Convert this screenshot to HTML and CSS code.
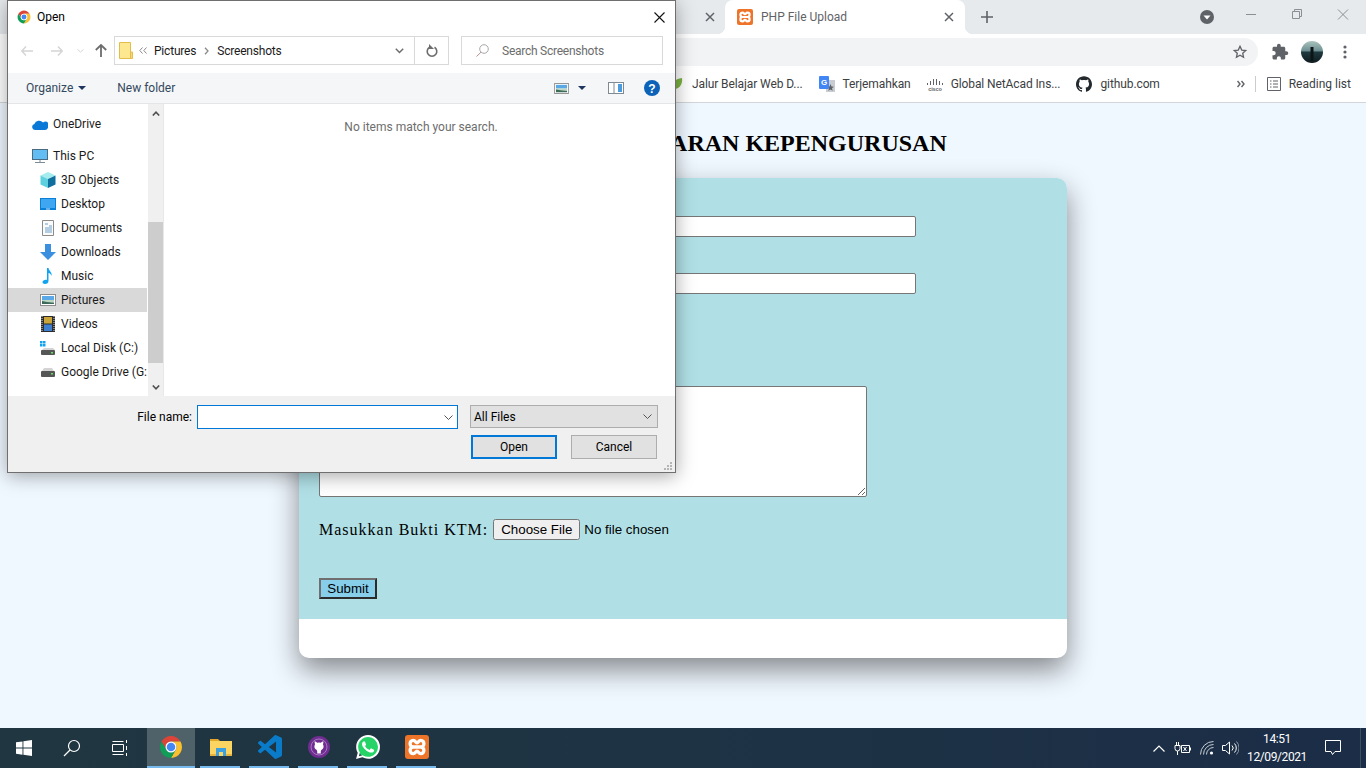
FILE: index.html
```html
<!DOCTYPE html>
<html lang="en">
<head>
    <meta charset="UTF-8">
    <title>PHP File Upload</title>
    <link rel="stylesheet" href="styles.css">
</head>
<body>
<svg class="defs" width="0" height="0">
    <symbol id="chrome" viewBox="0 0 48 48">
        <path fill="#db4437" d="M4.95 13A22 22 0 0 1 43.05 13H24A11 11 0 0 0 14.47 29.5z"/>
        <path fill="#fbc02d" d="M43.05 13A22 22 0 0 1 24 46l9.53-16.5A11 11 0 0 0 24 13z"/>
        <path fill="#0f9d58" d="M24 46A22 22 0 0 1 4.95 13l9.52 16.5A11 11 0 0 0 33.53 29.5z"/>
        <circle cx="24" cy="24" r="11" fill="#fff"/>
        <circle cx="24" cy="24" r="8.5" fill="#4587f4"/>
    </symbol>
    <symbol id="xampp" viewBox="0 0 16 16">
        <rect width="16" height="16" rx="2" fill="#ee7429"/>
        <path fill="none" stroke="#fff" stroke-width="2.200" d="M5.500 8C2.700 8 2.700 3.600 5.500 3.600 7 3.600 7 5.200 8 5.200s1-1.600 2.500-1.600c2.800 0 2.800 4.400 0 4.400 2.800 0 2.800 4.400 0 4.400C9 12.400 9 10.800 8 10.800s-1 1.600-2.500 1.600C2.700 12.400 2.700 8 5.500 8zM5.500 8h5"/>
    </symbol>
    <symbol id="github" viewBox="0 0 24 24">
        <path d="M12 .297c-6.630 0-12 5.373-12 12 0 5.303 3.438 9.800 8.205 11.385.6.113.82-.258.82-.577 0-.285-.01-1.040-.015-2.040-3.338.724-4.042-1.610-4.042-1.610C4.422 18.070 3.633 17.700 3.633 17.700c-1.087-.744.084-.729.084-.729 1.205.084 1.838 1.236 1.838 1.236 1.070 1.835 2.809 1.305 3.495.998.108-.776.417-1.305.76-1.605-2.665-.3-5.466-1.332-5.466-5.930 0-1.310.465-2.380 1.235-3.220-.135-.303-.54-1.523.105-3.176 0 0 1.005-.322 3.300 1.230.96-.267 1.980-.399 3-.405 1.020.006 2.040.138 3 .405 2.280-1.552 3.285-1.230 3.285-1.230.645 1.653.24 2.873.12 3.176.765.84 1.230 1.910 1.230 3.220 0 4.610-2.805 5.625-5.475 5.920.42.36.81 1.096.81 2.220 0 1.606-.015 2.896-.015 3.286 0 .315.21.69.825.57C20.565 22.092 24 17.592 24 12.297c0-6.627-5.373-12-12-12"/>
    </symbol>
    <symbol id="scenery" viewBox="0 0 16 12">
        <rect x=".5" y=".5" width="15" height="11" fill="#fff" stroke="#8d8d8d"/>
        <rect x="2" y="2" width="12" height="4" fill="#5aa9e6"/>
        <rect x="2" y="6" width="12" height="2" fill="#bcd6c4"/>
        <path fill="#3d6b5a" d="M2 10V7l5 1 7 .5V10z"/>
    </symbol>
    <symbol id="drive" viewBox="0 0 16 12">
        <path fill="#d4d4d4" d="M2 5l2-3h8l2 3z"/>
        <rect x="1" y="5" width="14" height="6" rx="1" fill="#565656"/>
        <rect x="11" y="7" width="2" height="1.500" fill="#5fe05f"/>
    </symbol>
</svg>

<header class="browser">
    <div class="tabstrip">
        <div class="tab-prev">
            <svg class="ico-x" width="10" height="10" viewBox="0 0 10 10"><path d="M1 1l8 8M9 1l-8 8" stroke="#5f6368" stroke-width="1.500"/></svg>
        </div>
        <div class="tab">
            <svg class="fav" width="16" height="16"><use href="#xampp"/></svg>
            <span class="tab-title">PHP File Upload</span>
            <svg class="ico-x" width="10" height="10" viewBox="0 0 10 10"><path d="M1 1l8 8M9 1l-8 8" stroke="#5f6368" stroke-width="1.500"/></svg>
        </div>
        <svg class="newtab" width="12" height="12" viewBox="0 0 12 12"><path d="M6 0v12M0 6h12" stroke="#5f6368" stroke-width="1.600"/></svg>
        <svg class="tabsearch" width="14" height="14" viewBox="0 0 14 14"><circle cx="7" cy="7" r="7" fill="#5f6368"/><path d="M3.500 5.500h7L7 9.500z" fill="#fff"/></svg>
        <div class="winctl">
            <svg width="46" height="34" viewBox="0 0 46 34"><path d="M18 14.500h10" stroke="#8b8e92"/></svg>
            <svg width="46" height="34" viewBox="0 0 46 34"><path d="M20.500 11.500v-2h7v7h-2M18.500 11.500h7v7h-7z" fill="none" stroke="#8b8e92"/></svg>
            <svg width="46" height="34" viewBox="0 0 46 34"><path d="M18 9.500l10 10M28 9.500l-10 10" stroke="#8b8e92"/></svg>
        </div>
    </div>
    <div class="toolbar">
        <div class="omnibox">
            <svg width="16" height="16" viewBox="0 0 24 24"><path fill="none" stroke="#5f6368" stroke-width="2" d="M12 3.500l2.600 5.600 6 .7-4.500 4.100 1.200 6-5.300-3-5.300 3 1.200-6L3.400 9.800l6-.7z"/></svg>
        </div>
        <svg class="tool-ico" width="18" height="18" viewBox="0 0 24 24"><path fill="#5f6368" d="M20.500 11H19V7c0-1.100-.9-2-2-2h-4V3.500C13 2.120 11.880 1 10.500 1S8 2.120 8 3.500V5H4c-1.100 0-1.990.9-1.990 2v3.800H3.500c1.490 0 2.700 1.210 2.700 2.700s-1.210 2.700-2.700 2.700H2V20c0 1.100.9 2 2 2h3.800v-1.500c0-1.490 1.210-2.700 2.700-2.700 1.490 0 2.700 1.210 2.700 2.700V22H17c1.100 0 2-.9 2-2v-4h1.500c1.380 0 2.500-1.120 2.500-2.500S21.880 11 20.500 11z"/></svg>
        <svg class="avatar" width="22" height="22" viewBox="0 0 22 22">
            <defs><linearGradient id="sky" x1="0" y1="0" x2="0" y2="1"><stop offset="0" stop-color="#a9c4bd"/><stop offset=".45" stop-color="#6d8f92"/><stop offset=".5" stop-color="#1f3a40"/><stop offset="1" stop-color="#0e1c20"/></linearGradient></defs>
            <circle cx="11" cy="11" r="11" fill="url(#sky)"/>
            <rect x="9.500" y="6" width="3" height="14" fill="#0c1416"/>
        </svg>
        <svg class="tool-dots" width="4" height="14" viewBox="0 0 4 14"><circle cx="2" cy="2" r="1.600" fill="#5f6368"/><circle cx="2" cy="7" r="1.600" fill="#5f6368"/><circle cx="2" cy="12" r="1.600" fill="#5f6368"/></svg>
    </div>
    <div class="bookmarks">
        <div class="bm">
            <svg width="16" height="16" viewBox="0 0 16 16"><path fill="#7cb342" d="M2 14C2 7 7 3 14 2c1 7-3 12-12 12z"/></svg>
            <span>Jalur Belajar Web D...</span>
        </div>
        <div class="bm">
            <svg width="16" height="16" viewBox="0 0 16 16"><path fill="#c9ccd1" d="M7 4h9v12H7z"/><path fill="#5f6368" d="M11.500 8l1 2.500 2.500.2-2 1.600.7 2.500-2.200-1.400-2.200 1.400.7-2.500-2-1.600 2.500-.2z"/><rect width="10" height="13" rx="1" fill="#4285f4"/><text x="5" y="9" class="g-mark">G</text></svg>
            <span>Terjemahkan</span>
        </div>
        <div class="bm">
            <svg width="16" height="16" viewBox="0 0 16 16"><path stroke="#5f6368" d="M.5 7V9M3.500 5V9M6.500 3V9M9.500 3V9M12.500 5V9M15.500 7V9"/><text x="8" y="14.500" class="cisco-mark">cisco</text></svg>
            <span>Global NetAcad Ins...</span>
        </div>
        <div class="bm">
            <svg class="gh" width="16" height="16"><use href="#github"/></svg>
            <span>github.com</span>
        </div>
        <div class="bm-end">
            <svg width="8" height="8" viewBox="0 0 8 8"><path d="M.5 1l2.500 3-2.500 3M4.500 1L7 4 4.500 7" fill="none" stroke="#5f6368" stroke-width="1.400"/></svg>
            <i class="bm-sep"></i>
            <div class="bm">
                <svg width="14" height="14" viewBox="0 0 14 14"><path fill="none" stroke="#5f6368" d="M.5.500h13v13H.500zM3 4h1.500M3 7h1.500M3 10h1.500M6 4h5M6 7h5M6 10h5"/></svg>
                <span>Reading list</span>
            </div>
        </div>
    </div>
</header>

<main class="page">
    <h2 class="title">FORMULIR PENDAFTARAN KEPENGURUSAN</h2>
    <div class="card">
        <form class="form">
            <input class="field" type="text">
            <input class="field field-second" type="text">
            <textarea class="notes"></textarea>
            <div class="file-row">
                <span class="file-label">Masukkan Bukti KTM:</span>
                <input class="file" type="file">
            </div>
            <button class="submit" type="button">Submit</button>
        </form>
    </div>
</main>

<footer class="taskbar">
    <div class="task-btn">
        <svg width="16" height="16" viewBox="0 0 16 16"><path fill="#fff" d="M0 2.300l6.500-.9v6.200H0zM7.400 1.300L16 0v7.600H7.400zM0 8.500h6.500v6.200L0 13.800zM7.400 8.500H16V16l-8.600-1.300z"/></svg>
    </div>
    <div class="task-btn">
        <svg width="18" height="18" viewBox="0 0 18 18"><circle cx="11" cy="7" r="5.500" fill="none" stroke="#fff" stroke-width="1.200"/><path d="M7 11l-6 6" stroke="#fff" stroke-width="1.300"/></svg>
    </div>
    <div class="task-btn">
        <svg width="17" height="16" viewBox="0 0 17 16"><path fill="none" stroke="#fff" d="M.5 4.500h11v7H.500zM.5 1.500h11M.5 14.500h11M14.500 0v3M14.500 6v4M14.500 13v3"/></svg>
    </div>
    <div class="task-app task-active"><svg width="24" height="24"><use href="#chrome"/></svg></div>
    <div class="task-app">
        <svg width="24" height="24" viewBox="0 0 24 24"><path fill="#e3a72a" d="M1 4h8l2 2H1z"/><path fill="#fcd462" d="M1 6h22v15H1z"/><path fill="#3b9fe0" d="M7 13h10v8h-3v-4h-4v4H7z"/><path fill="#e8b441" d="M1 19h6v2H1zM17 19h6v2h-6z"/></svg>
    </div>
    <div class="task-app">
        <svg width="24" height="24" viewBox="0 0 24 24"><path fill="#0a7bc9" d="M23.150 2.587L18.210.21a1.494 1.494 0 0 0-1.705.29l-9.460 8.630-4.120-3.128a.999.999 0 0 0-1.276.057L.327 7.261A1 1 0 0 0 .326 8.740L3.899 12 .326 15.260a1 1 0 0 0 .001 1.479L1.650 17.940a.999.999 0 0 0 1.276.057l4.120-3.128 9.460 8.630a1.492 1.492 0 0 0 1.704.29l4.942-2.377A1.500 1.500 0 0 0 24 20.060V3.939a1.500 1.500 0 0 0-.85-1.352zm-5.146 14.861L10.826 12l7.178-5.448v10.896z"/></svg>
    </div>
    <div class="task-app">
        <svg width="24" height="24" viewBox="0 0 24 24"><circle cx="12" cy="12" r="11" fill="#6f2d91"/><circle cx="12" cy="12" r="8" fill="none" stroke="#a678bf" stroke-width="1"/><path fill="#fff" d="M8 9.500l-.5-3c1 0 2 .6 2.600 1.200a8 8 0 0 1 3.800 0c.6-.6 1.600-1.200 2.600-1.200l-.5 3c1 1.500.8 4-1 5-.7.4-1.200 1-1.200 1.700v2.300h-3.600v-2.300c0-.7-.5-1.300-1.200-1.700-1.800-1-2-3.500-1-5z"/></svg>
    </div>
    <div class="task-app">
        <svg width="24" height="24" viewBox="0 0 24 24"><circle cx="12" cy="12" r="10.500" fill="#25d366"/><path fill="#fff" d="M17.472 14.382c-.297-.149-1.758-.867-2.030-.967-.273-.099-.471-.148-.67.15-.197.297-.767.966-.94 1.164-.173.199-.347.223-.644.075-.297-.15-1.255-.463-2.390-1.475-.883-.788-1.480-1.761-1.653-2.059-.173-.297-.018-.458.13-.606.134-.133.298-.347.446-.52.149-.174.198-.298.298-.497.099-.198.05-.371-.025-.52-.075-.149-.669-1.612-.916-2.207-.242-.579-.487-.5-.669-.51-.173-.008-.371-.01-.57-.01-.198 0-.52.074-.792.372-.272.297-1.040 1.016-1.040 2.479 0 1.462 1.065 2.875 1.213 3.074.149.198 2.096 3.200 5.077 4.487.709.306 1.262.489 1.694.625.712.227 1.360.195 1.871.118.571-.085 1.758-.719 2.006-1.413.248-.694.248-1.289.173-1.413-.074-.124-.272-.198-.57-.347m-5.421 7.403h-.004a9.870 9.870 0 0 1-5.031-1.378l-.361-.214-3.741.982.998-3.648-.235-.374a9.860 9.860 0 0 1-1.510-5.260c.001-5.450 4.436-9.884 9.888-9.884 2.640 0 5.122 1.030 6.988 2.898a9.825 9.825 0 0 1 2.893 6.994c-.003 5.450-4.437 9.884-9.885 9.884m8.413-18.297A11.815 11.815 0 0 0 12.050 0C5.495 0 .16 5.335.157 11.892c0 2.096.547 4.142 1.588 5.945L.057 24l6.305-1.654a11.882 11.882 0 0 0 5.683 1.448h.005c6.554 0 11.890-5.335 11.893-11.893a11.821 11.821 0 0 0-3.480-8.413z"/></svg>
    </div>
    <div class="task-app"><svg width="24" height="24"><use href="#xampp"/></svg></div>
    <div class="tray">
        <svg class="tray-ico" width="12" height="7" viewBox="0 0 12 7"><path d="M.5 6.500L6 1l5.500 5.500" fill="none" stroke="#fff" stroke-width="1.200"/></svg>
        <svg class="tray-ico" width="17" height="13" viewBox="0 0 17 13"><path fill="none" stroke="#fff" d="M1 3.500h5v3a2.500 2.500 0 0 1-5 0zM2.500 0v3.500M4.500 0v3.500M3.500 9v4M7.500 3.500h8v7h-8zM16.500 5.500v3M9.500 5l3 4M12.500 5l-3 4"/></svg>
        <svg class="tray-ico" width="16" height="14" viewBox="0 0 16 14"><path fill="none" stroke="#c9ced4" d="M.5 13.500A13 13 0 0 1 13.500.5M3.500 13.500A10 10 0 0 1 13.500 3.500M6.500 13.500a7 7 0 0 1 7-7"/><circle cx="11.500" cy="12" r="1.600" fill="#fff"/></svg>
        <svg class="tray-ico" width="17" height="14" viewBox="0 0 17 14"><path fill="none" stroke="#fff" d="M.5 4.500h3l4-3.500v12l-4-3.500h-3zM10 4.500a3.500 3.500 0 0 1 0 5M12.500 2.500a6.500 6.500 0 0 1 0 9"/><path fill="none" stroke="#8e98a3" d="M14.500.5a9.500 9.500 0 0 1 0 13"/></svg>
        <div class="clock"><span>14:51</span><span>12/09/2021</span></div>
        <div class="notify">
            <svg width="16" height="16" viewBox="0 0 16 16"><path fill="none" stroke="#fff" d="M.5.500h15v11H10l-2.500 3-1.500-3H.500z"/></svg>
        </div>
    </div>
</footer>

<div class="dialog">
    <div class="dlg-title">
        <svg width="14" height="14"><use href="#chrome"/></svg>
        <span>Open</span>
        <svg class="dlg-close" width="11" height="11" viewBox="0 0 11 11"><path d="M.5.500l10 10M10.500.500l-10 10" stroke="#111" stroke-width="1.100"/></svg>
    </div>
    <div class="dlg-nav">
        <div class="nav-btns">
            <svg width="12" height="10" viewBox="0 0 12 10"><path d="M12 5H1M5 .5L.8 5 5 9.500" fill="none" stroke="#d5d5d5" stroke-width="1.500"/></svg>
            <svg width="12" height="10" viewBox="0 0 12 10"><path d="M0 5h11M7 .5L11.200 5 7 9.500" fill="none" stroke="#d5d5d5" stroke-width="1.500"/></svg>
            <svg width="7" height="4" viewBox="0 0 7 4"><path d="M.5.500L3.500 3l3-2.500" fill="none" stroke="#d5d5d5"/></svg>
            <svg width="12" height="13" viewBox="0 0 12 13"><path d="M6 13V1M.8 6L6 1l5.200 5" fill="none" stroke="#6d6d6d" stroke-width="1.800"/></svg>
        </div>
        <div class="address">
            <svg width="14" height="17" viewBox="0 0 14 17"><path fill="#fde88f" stroke="#e3bc4e" d="M.5.500h11v16H.500z"/><path fill="#f8d775" stroke="#e3bc4e" d="M11.500 10h2v6.500h-2z"/></svg>
            <svg class="crumb-ico" width="8" height="7" viewBox="0 0 8 7"><path d="M3.500.5L.8 3.500l2.700 3M7.500.5L4.800 3.500l2.700 3" fill="none" stroke="#8a8a8a"/></svg>
            <span class="crumb">Pictures</span>
            <svg class="crumb-ico" width="5" height="8" viewBox="0 0 5 8"><path d="M1 .8L4 4 1 7.200" fill="none" stroke="#8a8a8a" stroke-width="1.300"/></svg>
            <span class="crumb">Screenshots</span>
            <svg class="addr-drop" width="9" height="6" viewBox="0 0 9 6"><path d="M.8.800l3.700 3.700L8.200.800" fill="none" stroke="#6d6d6d" stroke-width="1.500"/></svg>
            <div class="addr-refresh">
                <svg width="12" height="13" viewBox="0 0 12 13"><path d="M8.500 3.300a4.800 4.800 0 1 1-5 0" fill="none" stroke="#6d6d6d" stroke-width="1.600"/><path d="M3 0v5h5z" fill="#6d6d6d"/></svg>
            </div>
        </div>
        <div class="search">
            <svg width="13" height="13" viewBox="0 0 13 13"><circle cx="8" cy="5" r="4.300" fill="none" stroke="#a8a8a8"/><path d="M5 8.200L.5 12.500" stroke="#b58f8f"/></svg>
            <span>Search Screenshots</span>
        </div>
    </div>
    <div class="dlg-cmd">
        <span class="cmd-text">Organize</span>
        <svg class="caret" width="8" height="4" viewBox="0 0 8 4"><path d="M0 0h8L4 4z" fill="#1e3560"/></svg>
        <span class="cmd-text cmd-new">New folder</span>
        <div class="cmd-right">
            <svg width="15" height="11"><use href="#scenery"/></svg>
            <svg class="caret caret-view" width="8" height="4" viewBox="0 0 8 4"><path d="M0 0h8L4 4z" fill="#1e3560"/></svg>
            <svg class="pane-ico" width="16" height="12" viewBox="0 0 16 12"><rect x=".5" y=".5" width="15" height="11" fill="#fff" stroke="#7f8a94"/><rect x="10" y="2" width="4" height="8" fill="#4a9be0"/><path d="M6 1v10" stroke="#7f8a94"/></svg>
            <svg class="help-ico" width="16" height="16" viewBox="0 0 16 16"><circle cx="8" cy="8" r="8" fill="#0c62b8"/><text x="8" y="12.500" class="help-mark">?</text></svg>
        </div>
    </div>
    <div class="dlg-body">
        <div class="sidebar">
            <div class="nav-group">
                <div class="nav-item">
                    <svg width="16" height="11" viewBox="0 0 16 11"><path fill="#0a78d7" d="M3 11a3 3 0 0 1-.6-5.900A5 5 0 0 1 11 3.500 3.500 3.500 0 0 1 15.800 9c-.4 1.200-1.400 2-2.800 2z"/></svg>
                    <span>OneDrive</span>
                </div>
            </div>
            <div class="nav-group">
                <div class="nav-item">
                    <svg width="16" height="15" viewBox="0 0 16 15"><rect x=".5" y=".5" width="15" height="10" fill="#62bdf2" stroke="#4a6b82"/><path d="M8 11v2M3 13.500h10" stroke="#7a8a96"/></svg>
                    <span>This PC</span>
                </div>
                <div class="nav-item nav-sub">
                    <svg width="16" height="16" viewBox="0 0 16 16"><path fill="#a5ecef" d="M8 0l7.500 3.500L8 7 .5 3.500z"/><path fill="#5fd0de" d="M.5 3.500L8 7v9L.5 12.500z"/><path fill="#0f6f9d" d="M15.500 3.500L8 7v9l7.500-3.500z"/></svg>
                    <span>3D Objects</span>
                </div>
                <div class="nav-item nav-sub">
                    <svg width="16" height="12" viewBox="0 0 16 12"><rect width="16" height="12" fill="#0a7fd8"/><rect x="1" y="1" width="14" height="9" fill="#3fa6f2"/><path d="M6 11h4" stroke="#cfe6f8"/></svg>
                    <span>Desktop</span>
                </div>
                <div class="nav-item nav-sub">
                    <svg width="16" height="16" viewBox="0 0 16 16"><path fill="#fbfbfb" stroke="#8b8b8b" d="M2.500.5h11v15h-11z"/><path stroke="#6aa0c8" d="M5 4h3M9 6h3M5 8h7M5 10h7M5 12h7"/></svg>
                    <span>Documents</span>
                </div>
                <div class="nav-item nav-sub">
                    <svg width="16" height="16" viewBox="0 0 16 16"><path fill="#3a8fdf" d="M5 0h6v8h5l-8 8-8-8h5z"/></svg>
                    <span>Downloads</span>
                </div>
                <div class="nav-item nav-sub">
                    <svg width="16" height="16" viewBox="0 0 16 16"><path fill="#12a3f0" d="M7 0h1.500c.3 3 4 4 3 8-.3-1.500-1.500-2.800-3-3v8c0 1.800-1.500 3-3.500 3C3.500 16 2.500 15 2.500 14c0-1.500 2.300-2.800 4.500-2.200z"/></svg>
                    <span>Music</span>
                </div>
                <div class="nav-item nav-sub nav-selected">
                    <svg width="16" height="12"><use href="#scenery"/></svg>
                    <span>Pictures</span>
                </div>
                <div class="nav-item nav-sub">
                    <svg width="16" height="16" viewBox="-1 0 16 16"><rect width="14" height="16" fill="#2c2c2c"/><rect x="3" y="1" width="8" height="6.500" fill="#c9a53a"/><rect x="3" y="8.500" width="8" height="6.500" fill="#3f7fd0"/><path stroke="#ddd" stroke-dasharray="1 1" d="M1 0v16M13 0v16"/></svg>
                    <span>Videos</span>
                </div>
                <div class="nav-item nav-sub">
                    <svg width="16" height="16" viewBox="0 0 16 16"><path fill="#12a3f0" d="M0 1h2.500v2.500H0zM3 1h2.500v2.500H3zM0 4h2.500v2.500H0zM3 4h2.500v2.500H3z"/><path fill="#d4d4d4" d="M2 10l2-2h9l2 2z"/><rect x="1" y="10" width="14" height="5" rx="1" fill="#565656"/><rect x="11" y="12" width="2" height="1.500" fill="#5fe05f"/></svg>
                    <span>Local Disk (C:)</span>
                </div>
                <div class="nav-item nav-sub">
                    <svg width="16" height="12"><use href="#drive"/></svg>
                    <span>Google Drive (G:</span>
                </div>
            </div>
        </div>
        <div class="scrollbar">
            <svg class="sb-up" width="8" height="5" viewBox="0 0 8 5"><path d="M.8 4.500L4 1.200l3.200 3.300" fill="none" stroke="#505050" stroke-width="1.600"/></svg>
            <div class="sb-thumb"></div>
            <svg class="sb-down" width="8" height="5" viewBox="0 0 8 5"><path d="M.8.500L4 3.800 7.200.500" fill="none" stroke="#505050" stroke-width="1.600"/></svg>
        </div>
        <div class="files">No items match your search.</div>
    </div>
    <div class="dlg-foot">
        <div class="foot-row">
            <span class="foot-label">File name:</span>
            <div class="name-box">
                <svg width="9" height="5" viewBox="0 0 9 5"><path d="M.5.500l4 4 4-4" fill="none" stroke="#555"/></svg>
            </div>
            <div class="type-box">
                <span>All Files</span>
                <svg width="9" height="5" viewBox="0 0 9 5"><path d="M.5.500l4 4 4-4" fill="none" stroke="#555"/></svg>
            </div>
        </div>
        <div class="foot-row foot-btns">
            <button class="dlg-btn dlg-default" type="button">Open</button>
            <button class="dlg-btn" type="button">Cancel</button>
        </div>
        <svg class="grip" width="8" height="8" viewBox="0 0 8 8"><path fill="#b5b5b5" d="M6 0h2v2H6zM3 3h2v2H3zM6 3h2v2H6zM0 6h2v2H0zM3 6h2v2H3zM6 6h2v2H6z"/></svg>
    </div>
</div>
</body>
</html>
```

FILE: styles.css
```css
*{
    margin: 0;
    padding: 0;
    box-sizing: border-box;
}
html, body{
    width: 1366px;
    height: 768px;
    overflow: hidden;
}
body{
    display: flex;
    flex-direction: column;
    position: relative;
    font-family: Roboto, "Liberation Sans", sans-serif;
    font-size: 12px;
    color: #1b1b1b;
}
svg{
    flex: none;
    display: block;
}
.defs{
    position: absolute;
}

/* browser */
.browser{
    flex: none;
}
.tabstrip{
    height: 34px;
    display: flex;
    align-items: center;
    background: #e7eaed;
}
.tab-prev{
    width: 725px;
    display: flex;
    justify-content: flex-end;
    padding-right: 10px;
}
.tab{
    width: 240px;
    height: 34px;
    display: flex;
    align-items: center;
    padding: 0 11px 0 12px;
    background: #fff;
    border-radius: 8px 8px 0 0;
    position: relative;
}
.tab::before, .tab::after{
    content: "";
    position: absolute;
    bottom: 0;
    width: 8px;
    height: 8px;
}
.tab::before{
    left: -8px;
    background: radial-gradient(circle at 0 0, transparent 8px, #fff 8.5px);
}
.tab::after{
    right: -8px;
    background: radial-gradient(circle at 100% 0, transparent 8px, #fff 8.5px);
}
.tab-title{
    margin-left: 8px;
    flex: 1;
    color: #5f6368;
}
.newtab{
    margin-left: 16px;
}
.tabsearch{
    margin-left: 207px;
}
.winctl{
    margin-left: auto;
    display: flex;
}
.toolbar{
    height: 32px;
    padding-top: 4px;
    display: flex;
    align-items: center;
    background: #fff;
}
.omnibox{
    width: 1158px;
    height: 28px;
    margin-left: 100px;
    padding-right: 10px;
    display: flex;
    align-items: center;
    justify-content: flex-end;
    background: #f1f3f4;
    border-radius: 14px;
}
.tool-ico{
    margin-left: 13px;
}
.avatar{
    margin-left: 12px;
}
.tool-dots{
    margin-left: 20px;
}
.bookmarks{
    height: 37px;
    padding: 0 15px 1px 668px;
    display: flex;
    align-items: center;
    background: #fff;
    border-bottom: 1px solid #d3d5d8;
}
.bm{
    display: flex;
    align-items: center;
    gap: 8px;
    margin-right: 16px;
    color: #3c4043;
    letter-spacing: -.1px;
}
.bm-end{
    margin-left: auto;
    display: flex;
    align-items: center;
}
.bm-end .bm{
    margin: 0;
    letter-spacing: 0;
}
.bm-sep{
    width: 1px;
    height: 16px;
    margin: 0 11px 0 10px;
    background: #ccc;
}
.g-mark{
    font: bold 8px "Liberation Sans", sans-serif;
    fill: #fff;
    text-anchor: middle;
}
.cisco-mark{
    font: bold 5.500px "Liberation Sans", sans-serif;
    fill: #5f6368;
    text-anchor: middle;
}
.gh{
    fill: #24292e;
}

/* page */
.page{
    flex: 1;
    background: #f0f8ff;
    min-height: 0;
}
.title{
    margin: 27px 0 21px;
    text-align: center;
    font-family: "Liberation Serif", serif;
    font-size: 24px;
    line-height: 27px;
    color: #000;
}
.card{
    width: 768px;
    height: 480px;
    margin: 0 auto;
    background: #fff;
    border-radius: 10px;
    box-shadow: 0 12px 28px rgba(0,0,0,.45);
    overflow: hidden;
}
.form{
    height: 441px;
    padding: 38px 151px 20px 20px;
    display: flex;
    flex-direction: column;
    align-items: flex-start;
    background: #b0e0e6;
}
.field{
    width: 400px;
    height: 21px;
    align-self: flex-end;
    border: 1px solid #767676;
    border-radius: 2px;
    background: #fff;
}
.field-second{
    margin-top: 36px;
}
.notes{
    width: 548px;
    height: 111px;
    margin-top: 92px;
    border: 1px solid #767676;
    border-radius: 2px;
    background: #fff;
}
.file-row{
    margin-top: 22px;
    height: 21px;
    display: flex;
    align-items: center;
    gap: 5px;
}
.file-label{
    font-family: "Liberation Serif", serif;
    font-size: 16px;
    letter-spacing: 1px;
    color: #000;
}
.file{
    font-family: "Liberation Sans", sans-serif;
    font-size: 13.333px;
    color: #000;
}
.submit{
    width: 58px;
    height: 21px;
    margin-top: 38px;
    font-family: "Liberation Sans", sans-serif;
    font-size: 13.333px;
    color: #000;
    background: #87ceeb;
    border: 2px solid;
    border-color: #6f6f6f #2c2c2c #2c2c2c #6f6f6f;
}

/* taskbar */
.taskbar{
    flex: none;
    height: 40px;
    display: flex;
    background: linear-gradient(90deg, #203640, #1e3344 50%, #1b2d47);
}
.task-btn{
    width: 48px;
    display: flex;
    align-items: center;
    justify-content: center;
}
.task-app{
    width: 49px;
    padding-bottom: 2px;
    display: flex;
    align-items: center;
    justify-content: center;
    position: relative;
}
.task-app::after{
    content: "";
    position: absolute;
    left: 4px;
    right: 5px;
    bottom: 0;
    height: 2px;
    background: #76b9ed;
}
.task-active{
    width: 48px;
    margin-left: 3px;
    margin-right: 1px;
    background: #4f626a;
}
.task-active::after{
    left: 0;
    right: 0;
}
.tray{
    margin-left: auto;
    padding-right: 5px;
    display: flex;
    align-items: center;
    color: #fff;
}
.tray-ico{
    margin-right: 9px;
}
.tray-ico:nth-child(3){
    margin-right: 6px;
}
.tray-ico:nth-child(4){
    margin-right: 3px;
}
.clock{
    width: 70px;
    display: flex;
    flex-direction: column;
    align-items: center;
    line-height: 18px;
    letter-spacing: -.4px;
}
.notify{
    width: 49px;
    height: 40px;
    padding-left: 13px;
    display: flex;
    align-items: center;
    border-right: 1px solid #3d4f63;
}

/* open file dialog */
.dialog{
    position: absolute;
    left: 7px;
    top: 0;
    width: 669px;
    height: 473px;
    display: flex;
    flex-direction: column;
    background: #fff;
    border: 1px solid #6f6f6f;
    box-shadow: 0 3px 18px rgba(0,0,0,.35);
}
.dlg-title{
    height: 32px;
    flex: none;
    padding-left: 9px;
    display: flex;
    align-items: center;
    gap: 6px;
    color: #000;
}
.dlg-close{
    margin-left: auto;
    margin-right: 10px;
}
.dlg-nav{
    height: 40px;
    flex: none;
    padding-top: 3px;
    display: flex;
    align-items: flex-start;
}
.nav-btns{
    width: 106px;
    height: 29px;
    padding-left: 13px;
    display: flex;
    align-items: center;
}
.nav-btns svg + svg{
    margin-left: 18px;
}
.nav-btns svg + svg + svg{
    margin-left: 14px;
}
.nav-btns svg + svg + svg + svg{
    margin-left: 11px;
}
.address{
    width: 335px;
    height: 29px;
    padding-left: 4px;
    display: flex;
    align-items: center;
    border: 1px solid #d9d9d9;
}
.crumb-ico{
    margin-left: 6px;
    margin-right: 7px;
}
.crumb + .crumb-ico{
    margin-left: 8px;
    margin-right: 8px;
}
.crumb{
    color: #1b1b1b;
    letter-spacing: -.2px;
}
.addr-drop{
    margin-left: auto;
    margin-right: 10px;
}
.addr-refresh{
    width: 34px;
    height: 27px;
    display: flex;
    align-items: center;
    justify-content: center;
    border-left: 1px solid #d9d9d9;
}
.search{
    width: 202px;
    height: 29px;
    margin-left: 12px;
    padding-left: 14px;
    display: flex;
    align-items: center;
    gap: 13px;
    color: #6d6d6d;
    letter-spacing: -.25px;
    border: 1px solid #d9d9d9;
}
.dlg-cmd{
    height: 31px;
    flex: none;
    padding-left: 18px;
    display: flex;
    align-items: center;
    background: #f5f6f7;
    border-bottom: 1px solid #e5e5e5;
}
.cmd-text{
    color: #34495e;
}
.caret{
    margin-left: 5px;
}
.cmd-new{
    margin-left: 31px;
}
.cmd-right{
    margin-left: auto;
    padding-right: 15px;
    display: flex;
    align-items: center;
}
.caret-view{
    margin-left: 9px;
}
.pane-ico{
    margin-left: 22px;
}
.help-ico{
    margin-left: 20px;
}
.help-mark{
    font: bold 12px "Liberation Sans", sans-serif;
    fill: #fff;
    text-anchor: middle;
}
.dlg-body{
    flex: 1;
    min-height: 0;
    display: flex;
}
.sidebar{
    width: 140px;
    flex: none;
    padding-top: 8px;
    overflow: hidden;
}
.nav-group{
    margin-bottom: 8px;
}
.nav-item{
    width: 139px;
    height: 24px;
    padding-left: 24px;
    display: flex;
    align-items: center;
    gap: 5px;
    white-space: nowrap;
}
.nav-sub{
    padding-left: 32px;
}
.nav-selected{
    background: #d9d9d9;
}
.scrollbar{
    width: 16px;
    flex: none;
    position: relative;
    background: #f0f0f0;
    border-right: 1px solid #e8e8e8;
}
.sb-up, .sb-down{
    position: absolute;
    left: 4px;
}
.sb-up{
    top: 7px;
}
.sb-down{
    bottom: 6px;
}
.sb-thumb{
    position: absolute;
    top: 118px;
    left: 0;
    width: 15px;
    height: 141px;
    background: #cdcdcd;
}
.files{
    flex: 1;
    padding: 16px 0 0 3px;
    text-align: center;
    color: #6d6d6d;
}
.dlg-foot{
    height: 76px;
    flex: none;
    padding-top: 9px;
    position: relative;
    background: #f0f0f0;
}
.foot-row{
    display: flex;
    align-items: flex-start;
    justify-content: flex-end;
    padding-right: 17px;
}
.foot-label{
    line-height: 24px;
    color: #000;
}
.name-box{
    width: 261px;
    height: 24px;
    margin-left: 5px;
    padding-right: 4px;
    display: flex;
    align-items: center;
    justify-content: flex-end;
    background: #fff;
    border: 1px solid #0078d7;
}
.type-box{
    width: 188px;
    height: 23px;
    margin-left: 12px;
    padding: 0 5px 0 3px;
    display: flex;
    align-items: center;
    justify-content: space-between;
    color: #000;
    background: #e1e1e1;
    border: 1px solid #adadad;
}
.foot-btns{
    margin-top: 6px;
    gap: 14px;
    padding-right: 18px;
}
.dlg-btn{
    width: 86px;
    height: 24px;
    font-family: Roboto, "Liberation Sans", sans-serif;
    font-size: 12px;
    color: #000;
    background: #e1e1e1;
    border: 1px solid #adadad;
}
.dlg-default{
    border: 2px solid #0078d7;
}
.grip{
    position: absolute;
    right: 3px;
    bottom: 2px;
}
```
